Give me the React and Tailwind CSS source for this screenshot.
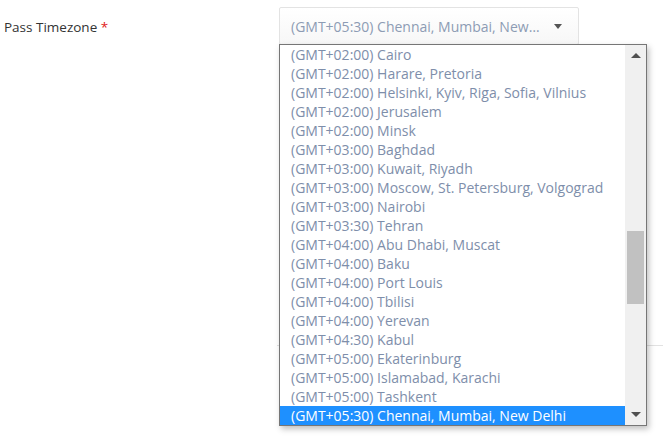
import React from "react";

const zones = [
  "(GMT+02:00) Cairo",
  "(GMT+02:00) Harare, Pretoria",
  "(GMT+02:00) Helsinki, Kyiv, Riga, Sofia, Vilnius",
  "(GMT+02:00) Jerusalem",
  "(GMT+02:00) Minsk",
  "(GMT+03:00) Baghdad",
  "(GMT+03:00) Kuwait, Riyadh",
  "(GMT+03:00) Moscow, St. Petersburg, Volgograd",
  "(GMT+03:00) Nairobi",
  "(GMT+03:30) Tehran",
  "(GMT+04:00) Abu Dhabi, Muscat",
  "(GMT+04:00) Baku",
  "(GMT+04:00) Port Louis",
  "(GMT+04:00) Tbilisi",
  "(GMT+04:00) Yerevan",
  "(GMT+04:30) Kabul",
  "(GMT+05:00) Ekaterinburg",
  "(GMT+05:00) Islamabad, Karachi",
  "(GMT+05:00) Tashkent",
  "(GMT+05:30) Chennai, Mumbai, New Delhi",
];

export default function App() {
  const selected = zones.length - 1;

  return (
    <div
      className="relative w-[663px] h-[438px] bg-white overflow-hidden"
      style={{ fontFamily: '"Open Sans", "Noto Sans", sans-serif' }}
    >
      {/* form row */}
      <div className="flex items-start pt-[7px]">
        <label className="w-[279px] pl-[4px] pt-[11px] text-[13.5px] leading-[18px] text-[#333]">
          Pass Timezone <span className="text-[#e02020]">*</span>
        </label>
        <div className="relative">
          <div className="flex items-center w-[300px] h-[38px] pl-[11px] pr-[16px] border border-[#e3e3e3] rounded-[2px] bg-gradient-to-b from-white to-[#f7f7f7]">
            <span className="flex-1 truncate text-[14px] text-[#8d9cb4]">
              (GMT+05:30) Chennai, Mumbai, New Delhi
            </span>
            <span className="ml-[12px] w-0 h-0 border-l-[4px] border-r-[4px] border-t-[5px] border-l-transparent border-r-transparent border-t-[#555]" />
          </div>

          {/* open list */}
          <div className="absolute left-0 top-[37px] z-10 flex w-[368px] h-[382px] border border-[#767676] bg-white shadow-[2px_3px_6px_rgba(0,0,0,0.25)]">
            <ul className="flex-1 overflow-hidden">
              {zones.map((z, i) => (
                <li
                  key={z}
                  className={
                    i === selected
                      ? "h-[19px] pl-[11px] text-[14px] leading-[19px] whitespace-nowrap bg-[#1e90ff] text-white"
                      : "h-[19px] pl-[11px] text-[14px] leading-[19px] whitespace-nowrap text-[#7e8eaa]"
                  }
                >
                  {z}
                </li>
              ))}
            </ul>
            {/* scrollbar */}
            <div className="relative w-[21px] bg-[#f0f0f0]">
              <span className="absolute left-[6px] top-[8px] w-0 h-0 border-l-[5px] border-r-[5px] border-b-[5px] border-l-transparent border-r-transparent border-b-[#505050]" />
              <div className="absolute left-[2px] top-[186px] w-[17px] h-[73px] bg-[#c1c1c1]" />
              <span className="absolute left-[6px] bottom-[8px] w-0 h-0 border-l-[5px] border-r-[5px] border-t-[5px] border-l-transparent border-r-transparent border-t-[#505050]" />
            </div>
          </div>
        </div>
      </div>

      {/* divider under form section */}
      <div className="mt-[300px] ml-[277px] border-t border-[#e2e2e2]" />
    </div>
  );
}
